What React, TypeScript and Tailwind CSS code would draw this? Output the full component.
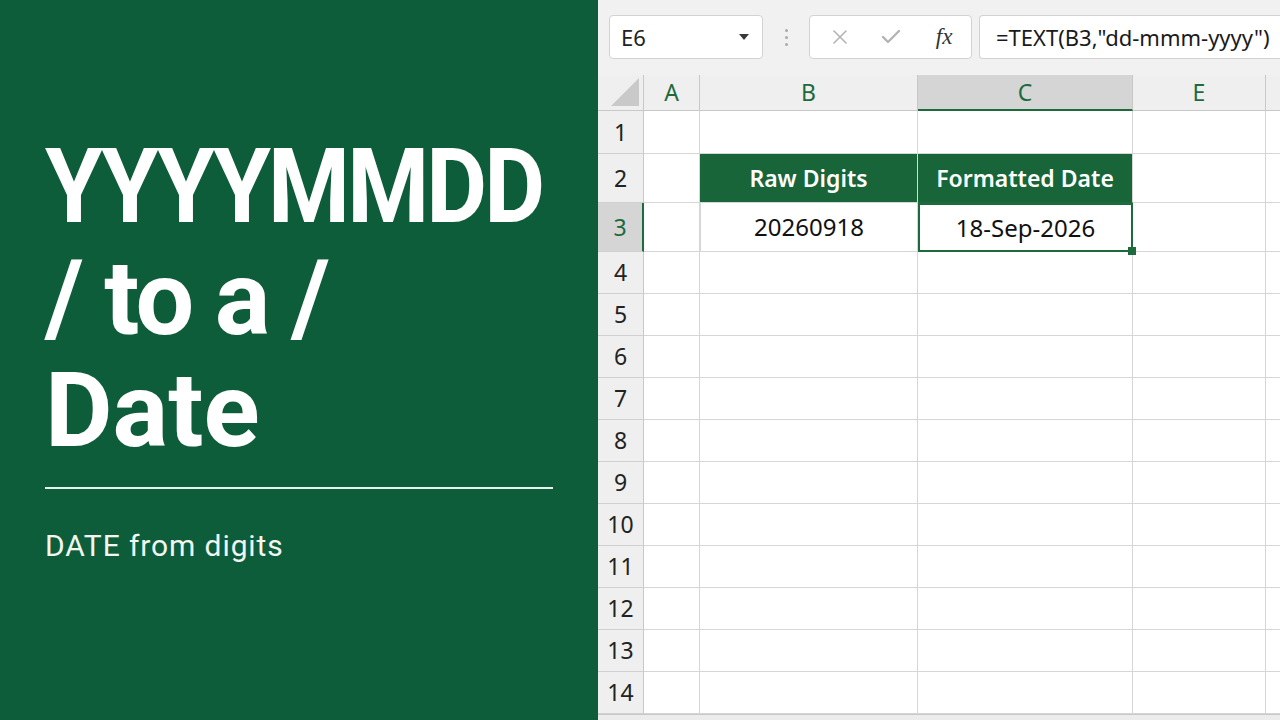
import { X, Check } from "lucide-react";

const rowHeights: Record<number, string> = {
  1: "h-[43px]",
  2: "h-[49px]",
  3: "h-[49px]",
};

const rows = Array.from({ length: 14 }, (_, i) => i + 1);

function Cell({ className = "", children }: { className?: string; children?: React.ReactNode }) {
  return (
    <div className={"relative flex shrink-0 items-center justify-center border-r border-b border-[#d6d6d6] " + className}>
      {children}
    </div>
  );
}

function SheetRow({ n }: { n: number }) {
  const h = rowHeights[n] ?? "h-[42px]";
  const active = n === 3;
  return (
    <div className={"flex " + h}>
      <div
        className={
          "flex w-[46px] shrink-0 items-center justify-center border-b border-[#d0d0d0] text-[23px] " +
          (active
            ? "border-r-2 border-r-[#1d6b3c] bg-[#d5d5d5] text-[#1d6b3c]"
            : "border-r border-r-[#c8c8c8] bg-[#efefef] text-[#222]")
        }
      >
        {n}
      </div>
      <Cell className="w-[56px] bg-white" />
      {n === 2 ? (
        <>
          <Cell className="w-[218px] border-[#1f6a40] bg-[#176539] font-semibold text-white">Raw Digits</Cell>
          <Cell className="w-[215px] border-b-[#1f6a40] bg-[#176539] font-semibold text-white">Formatted Date</Cell>
        </>
      ) : n === 3 ? (
        <>
          <Cell className="w-[218px] border-l border-[#1f6a40] bg-white text-[24px] text-[#111]">20260918</Cell>
          <div className="relative z-10 flex w-[215px] shrink-0 items-center justify-center border-2 border-[#1d6b3c] bg-white text-[24px] text-[#111]">
            18-Sep-2026
            {/* fill handle */}
            <span className="absolute -right-[5px] -bottom-[5px] h-[8px] w-[8px] bg-[#1d6b3c]" />
          </div>
        </>
      ) : (
        <>
          <Cell className="w-[218px] bg-white" />
          <Cell className="w-[215px] bg-white" />
        </>
      )}
      <Cell className="w-[133px] bg-white" />
      <div className="flex-1 border-b border-[#d6d6d6] bg-white" />
    </div>
  );
}

export default function App() {
  return (
    <div className="flex h-[720px] w-[1280px] overflow-hidden font-['Noto_Sans',sans-serif]">
      {/* title panel */}
      <div className="flex w-[598px] shrink-0 flex-col bg-[#0e5d3a] px-[45px] pt-[131px] text-white">
        <h1 className="font-['Roboto',sans-serif] text-[104px] leading-[112px] font-bold">
          <span className="inline-block origin-left scale-x-[0.9] tracking-[-0.03em]">YYYYMMDD</span>
          <br />
          <span className="tracking-[-0.025em]">/ to a /</span>
          <br />
          Date
        </h1>
        <div className="mt-[20px] h-[2px] w-[508px] bg-[#e9f1ec]" />
        <p className="mt-[42px] font-['Roboto',sans-serif] text-[30px] leading-none tracking-[0.03em] text-[#f2f6f3]">
          DATE from digits
        </p>
      </div>

      {/* spreadsheet */}
      <div className="flex flex-1 flex-col bg-[#f1f1f1] text-[23px]">
        <div className="flex h-[75px] shrink-0 items-start pt-[15px] pl-[11px]">
          <div className="flex h-[44px] w-[154px] items-center justify-between rounded-[4px] border border-[#d2d2d2] bg-white pr-[12px] pl-[11px] text-[22px] text-[#222]">
            E6
            <svg width="12" height="8" viewBox="0 0 12 8">
              <path d="M1 1h10L6 7z" fill="#3a3a3a" />
            </svg>
          </div>
          <div className="flex h-[44px] w-[46px] flex-col items-center justify-center gap-[4px]">
            <span className="h-[3px] w-[3px] rounded-full bg-[#aaa]" />
            <span className="h-[3px] w-[3px] rounded-full bg-[#aaa]" />
            <span className="h-[3px] w-[3px] rounded-full bg-[#aaa]" />
          </div>
          <div className="flex h-[44px] w-[163px] items-center rounded-[4px] border border-[#d2d2d2] bg-white">
            <span className="flex w-[54px] justify-center pl-[6px]">
              <X size={24} strokeWidth={1.6} color="#b4b4b4" />
            </span>
            <span className="flex w-[54px] justify-center">
              <Check size={24} strokeWidth={2.4} color="#b4b4b4" />
            </span>
            <span className="flex w-[54px] justify-center font-['Liberation_Serif',serif] text-[23px] text-[#333] italic">
              fx
            </span>
          </div>
          <div className="ml-[7px] flex h-[44px] flex-1 items-center rounded-l-[4px] border border-r-0 border-[#d2d2d2] bg-white pl-[16px] text-[22px] whitespace-nowrap text-[#1a1a1a]">
            =TEXT(B3,"dd-mmm-yyyy")
          </div>
        </div>

        {/* column headings */}
        <div className="flex h-[36px] shrink-0 text-[#1d6b3c]">
          <div className="flex w-[46px] shrink-0 items-end justify-end border-r border-b border-[#c8c8c8] bg-[#efefef] p-[4px]">
            <svg width="28" height="28" viewBox="0 0 28 28">
              <path d="M28 0V28H0z" fill="#c9c9c9" />
            </svg>
          </div>
          <div className="flex w-[56px] shrink-0 items-center justify-center border-r border-b border-[#c8c8c8] bg-[#efefef]">A</div>
          <div className="flex w-[218px] shrink-0 items-center justify-center border-r border-b border-[#c8c8c8] bg-[#efefef]">B</div>
          <div className="flex w-[215px] shrink-0 items-center justify-center border-r border-b-2 border-r-[#c8c8c8] border-b-[#1d6b3c] bg-[#d5d5d5]">C</div>
          <div className="flex w-[133px] shrink-0 items-center justify-center border-r border-b border-[#c8c8c8] bg-[#efefef]">E</div>
          <div className="flex-1 border-b border-[#c8c8c8] bg-[#efefef]" />
        </div>

        {rows.map((n) => (
          <SheetRow key={n} n={n} />
        ))}
        <div className="flex-1 border-t border-[#c8c8c8] bg-[#ececec]" />
      </div>
    </div>
  );
}
